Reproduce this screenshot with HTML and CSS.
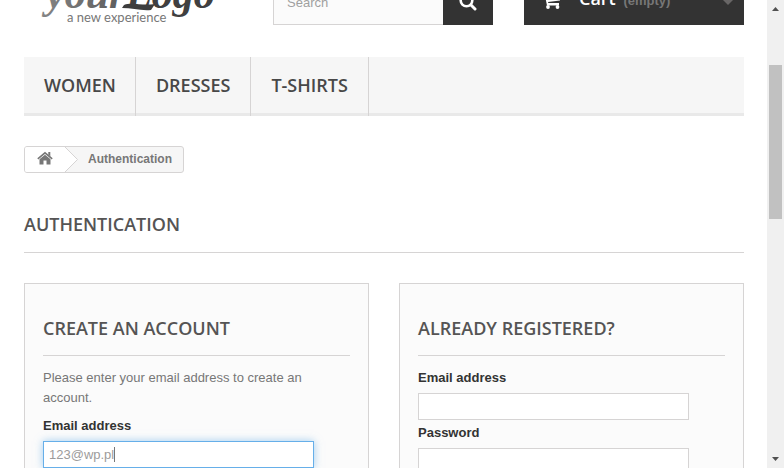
FILE: index.html
```html
<!DOCTYPE html>
<html lang="en">
<head>
<meta charset="utf-8">
<title>Login - My Store</title>
<link rel="stylesheet" href="styles.css">
</head>
<body>
<div class="viewport">
  <div class="page">
    <header class="header">
      <a class="logo" href="#" aria-label="Your Logo, a new experience">
        <svg width="200" height="45" viewBox="0 0 200 45">
          <defs>
            <linearGradient id="ink" x1="0" x2="1" y1="0" y2="0">
              <stop offset="0" stop-color="#858585"/>
              <stop offset="1" stop-color="#5a5a5a"/>
            </linearGradient>
          </defs>
          <text class="logo-name" x="22" y="28" fill="url(#ink)">your</text>
          <text class="logo-name" x="102" y="28" fill="#404040">Logo</text>
          <path d="M100 25 C108 22 118 26 131 24 L127 30 C117 31 108 28 98 28Z" fill="#3d3d3d"/>
          <text class="logo-tag" x="43" y="42">a new experience</text>
        </svg>
      </a>
      <form class="search">
        <input type="search" placeholder="Search" aria-label="Search">
        <button type="button" aria-label="Search">
          <svg width="18" height="18" viewBox="0 0 18 18"><circle cx="7.5" cy="7.5" r="5.8" fill="none" stroke="#fff" stroke-width="2.6"/><path d="M12 12l4 4" stroke="#fff" stroke-width="3" stroke-linecap="round"/></svg>
        </button>
      </form>
      <a class="cart" href="#">
        <svg class="cart-icon" width="19" height="18" viewBox="0 0 19 18"><path d="M0 0h3.800l.5 2H18v6.500L6 10l.3 1H17V13.500H5L2.600 2H0z" fill="#fff"/><circle cx="6" cy="15" r="1.900" fill="#fff"/><circle cx="15.500" cy="15" r="1.900" fill="#fff"/></svg>
        <span class="cart-text"><b>Cart</b> <span class="empty">(empty)</span></span>
        <svg class="chevron" width="12" height="8" viewBox="0 0 12 8"><path d="M0 1h12v1L6 8 0 2z" fill="#686666"/></svg>
      </a>
    </header>

    <nav class="menu">
      <a href="#">WOMEN</a>
      <a href="#">DRESSES</a>
      <a href="#">T-SHIRTS</a>
    </nav>

    <div class="breadcrumb">
      <a class="home" href="#" aria-label="Home">
        <svg width="16" height="16" viewBox="0 0 16 16"><path d="M8 3.700l5.500 4.600V13.500H9.500V9.500h-3v4h-4V8.300z" fill="#777"/><path d="M.8 7.800L8 1.800l7.200 6" fill="none" stroke="#777" stroke-width="1.600"/><path d="M11.300 1h2v4.500l-2-1.700z" fill="#777"/></svg>
      </a>
      <svg class="divider" width="13" height="25" viewBox="0 0 13 25"><path d="M0 0L12.500 12.500 0 25z" fill="#fff"/><path d="M0 0L12.500 12.500 0 25" fill="none" stroke="#d6d4d4"/></svg>
      <span class="current">Authentication</span>
    </div>

    <h1 class="heading">AUTHENTICATION</h1>

    <main class="panels">
      <form class="panel">
        <h2 class="heading">CREATE AN ACCOUNT</h2>
        <p>Please enter your email address to create an account.</p>
        <label for="new-email">Email address</label>
        <div class="field active">
          <input id="new-email" type="text" value="123@wp.pl">
          <span class="caret"></span>
        </div>
      </form>
      <form class="panel">
        <h2 class="heading">ALREADY REGISTERED?</h2>
        <label for="email">Email address</label>
        <div class="field"><input id="email" type="text"></div>
        <label for="password">Password</label>
        <div class="field"><input id="password" type="password"></div>
      </form>
    </main>
  </div>

  <div class="scrollbar" aria-hidden="true">
    <svg width="17" height="17" viewBox="0 0 17 17"><path d="M5 11L8.500 7 12 11z" fill="#505050"/></svg>
    <div class="track">
      <div class="before"></div>
      <div class="thumb"></div>
      <div class="after"></div>
    </div>
    <svg width="17" height="17" viewBox="0 0 17 17"><path d="M5 6h7L8.500 10z" fill="#505050"/></svg>
  </div>
</div>
</body>
</html>
```
FILE: styles.css
```css
* {
  box-sizing: border-box;
}

body {
  margin: 0;
  background: #fff;
  color: #777;
  font: 13px/20px "Liberation Sans", Arial, sans-serif;
}

a {
  color: inherit;
  text-decoration: none;
}

svg {
  display: block;
  flex: none;
}

.viewport {
  display: grid;
  grid-template-columns: 1fr 17px;
  grid-template-rows: 100%;
  height: 100vh;
  overflow: hidden;
}

/* the top of the header is scrolled out of view */
.page {
  margin-top: -20px;
  padding: 0 23px 0 24px;
  min-width: 0;
}

.header {
  display: grid;
  grid-template-columns: 1fr 220px 220px;
  gap: 31px;
  height: 45px;
  margin-bottom: 32px;
}

.logo-name {
  font: italic bold 42px "Liberation Serif", serif;
}

.logo-tag {
  font: 13px Lato, sans-serif;
  fill: #777;
}

.search {
  display: flex;
}

.search input {
  flex: 1;
  min-width: 0;
  padding: 0 13px;
  border: 1px solid #d6d4d4;
  border-right: 0;
  background: #fbfbfb;
  font: inherit;
  appearance: none;
}

.search input::placeholder {
  color: #a0a0a0;
  opacity: 1;
}

.search button {
  display: flex;
  align-items: center;
  justify-content: center;
  width: 50px;
  padding: 0 0 2px;
  border: 0;
  background: #333;
}

.cart {
  display: flex;
  align-items: center;
  padding: 0 10px 4px 18px;
  background: #333;
}

.cart-text {
  margin-left: 18px;
  padding-bottom: 2px;
  line-height: 22px;
}

.cart b {
  margin-right: 4px;
  color: #fff;
  font: 600 18px/22px "Open Sans", sans-serif;
}

.cart .empty {
  font-weight: bold;
  color: #777;
}

.chevron {
  margin-left: auto;
}

.menu {
  display: flex;
  margin-bottom: 30px;
  background: linear-gradient(#f6f6f6, #f6f6f6) no-repeat 0 0 / 100% calc(100% - 3px) #e9e9e9;
}

.menu a {
  padding: 17px 19px 20px 20px;
  border-right: 1px solid #d6d4d4;
  color: #484848;
  font: 600 18px/22px "Open Sans", sans-serif;
}

.menu a + a {
  padding-right: 20px;
}

.breadcrumb {
  display: inline-flex;
  align-items: center;
  height: 27px;
  border: 1px solid #d6d4d4;
  border-radius: 3px;
  overflow: hidden;
  background: #f6f6f6;
  font-weight: bold;
  font-size: 12px;
  line-height: 18px;
  vertical-align: top;
}

.home {
  display: flex;
  align-items: center;
  height: 25px;
  padding: 0 12px 2px;
  background: #fff;
}

.current {
  padding: 0 11px 2px 10px;
}

.heading {
  margin: 0;
  padding-bottom: 17px;
  border-bottom: 1px solid #d6d4d4;
  color: #555454;
  font: 600 18px/22px "Open Sans", sans-serif;
}

h1.heading {
  margin: 40px 0 30px;
}

.panels {
  display: grid;
  grid-template-columns: 1fr 1fr;
  gap: 30px;
}

.panel {
  padding: 33px 18px 20px;
  border: 1px solid #d6d4d4;
  background: #fbfbfb;
}

.panel .heading {
  margin-bottom: 12px;
  padding-bottom: 16px;
}

.panel p {
  margin: 0 0 8px;
}

.panel label {
  display: block;
  margin-bottom: 5px;
  color: #333;
  font-weight: bold;
}

.field {
  position: relative;
  max-width: 271px;
  margin-bottom: 3px;
}

.field input {
  display: block;
  width: 100%;
  height: 27px;
  padding: 0 5px;
  border: 1px solid #d6d4d4;
  background: #fff;
  color: #9c9b9b;
  font: inherit;
}

.field.active input {
  border-color: #66afe9;
  box-shadow: 0 0 8px rgba(102, 175, 233, 0.6);
  outline: 0;
}

.caret {
  position: absolute;
  top: 6px;
  left: 71px;
  width: 1px;
  height: 15px;
  background: #777;
}

.scrollbar {
  display: flex;
  flex-direction: column;
  background: #f0f0f0;
}

.track {
  display: flex;
  flex: 1;
  flex-direction: column;
  padding: 0 2px;
}

.before {
  flex: 48;
}

.thumb {
  flex: 154;
  background: #c1c1c1;
}

.after {
  flex: 232;
}
```
